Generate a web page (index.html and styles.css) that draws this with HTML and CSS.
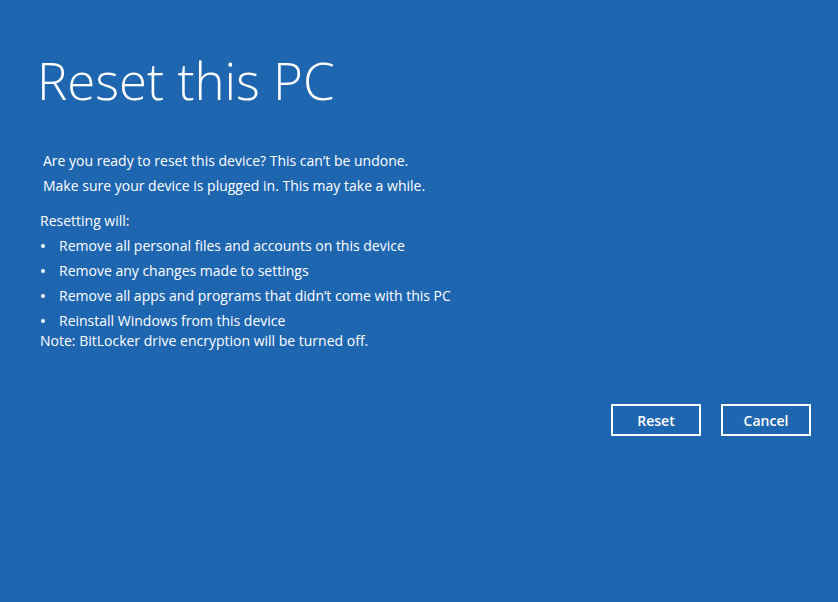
FILE: index.html
```html
<!DOCTYPE html>
<html lang="en">
    <head>
        <meta charset="UTF-8">
        <meta name="viewport" content="width=device-width, initial-scale=1.0">
        <title>Reset this PC</title>
        <link rel="stylesheet" href="styles.css">
    </head>
    <body>
        <div class="page">
            <h1 class="title">Reset this PC</h1>
            <div class="intro">
                <p>Are you ready to reset this device? This can’t be undone.</p>
                <p>Make sure your device is plugged in. This may take a while.</p>
            </div>
            <div class="details">
                <p class="lead">Resetting will:</p>
                <ul class="list">
                    <li>Remove all personal files and accounts on this device</li>
                    <li>Remove any changes made to settings</li>
                    <li>Remove all apps and programs that didn’t come with this PC</li>
                    <li>Reinstall Windows from this device</li>
                </ul>
                <p class="note">Note: BitLocker drive encryption will be turned off.</p>
            </div>
            <div class="actions">
                <button type="button" class="btn">Reset</button>
                <button type="button" class="btn">Cancel</button>
            </div>
        </div>
    </body>
</html>
```
FILE: styles.css
```css
html, body{
    margin: 0;
    height: 100%;
}
body{
    background-color: #1f66b1;
    color: #fff;
    font-family: "Open Sans", "Noto Sans", sans-serif;
    font-size: 14px;
}
.page{
    padding: 46px 27px 0 40px;
}
.title{
    margin: 0 0 0 -3px;
    font-size: 51px;
    font-weight: 300;
    line-height: 68px;
}
.intro{
    margin-top: 34px;
    padding-left: 3px;
}
.intro p{
    margin: 0;
    line-height: 25px;
}
.details{
    margin-top: 10px;
}
.lead{
    margin: 0;
    line-height: 25px;
}
.list{
    margin: 0;
    padding: 0;
    list-style: none;
}
.list li{
    position: relative;
    padding-left: 19px;
    line-height: 25px;
}
.list li::before{
    content: "";
    position: absolute;
    left: 1px;
    top: 11px;
    width: 4px;
    height: 4px;
    border-radius: 50%;
    background-color: #fff;
}
.note{
    margin: 0;
    line-height: 15px;
}
.actions{
    display: flex;
    justify-content: flex-end;
    gap: 20px;
    margin-top: 56px;
}
.btn{
    width: 90px;
    height: 32px;
    border: 2px solid #fff;
    background: transparent;
    color: #fff;
    font-family: "Open Sans", "Noto Sans", sans-serif;
    font-size: 14px;
    font-weight: 600;
    cursor: pointer;
}
```
